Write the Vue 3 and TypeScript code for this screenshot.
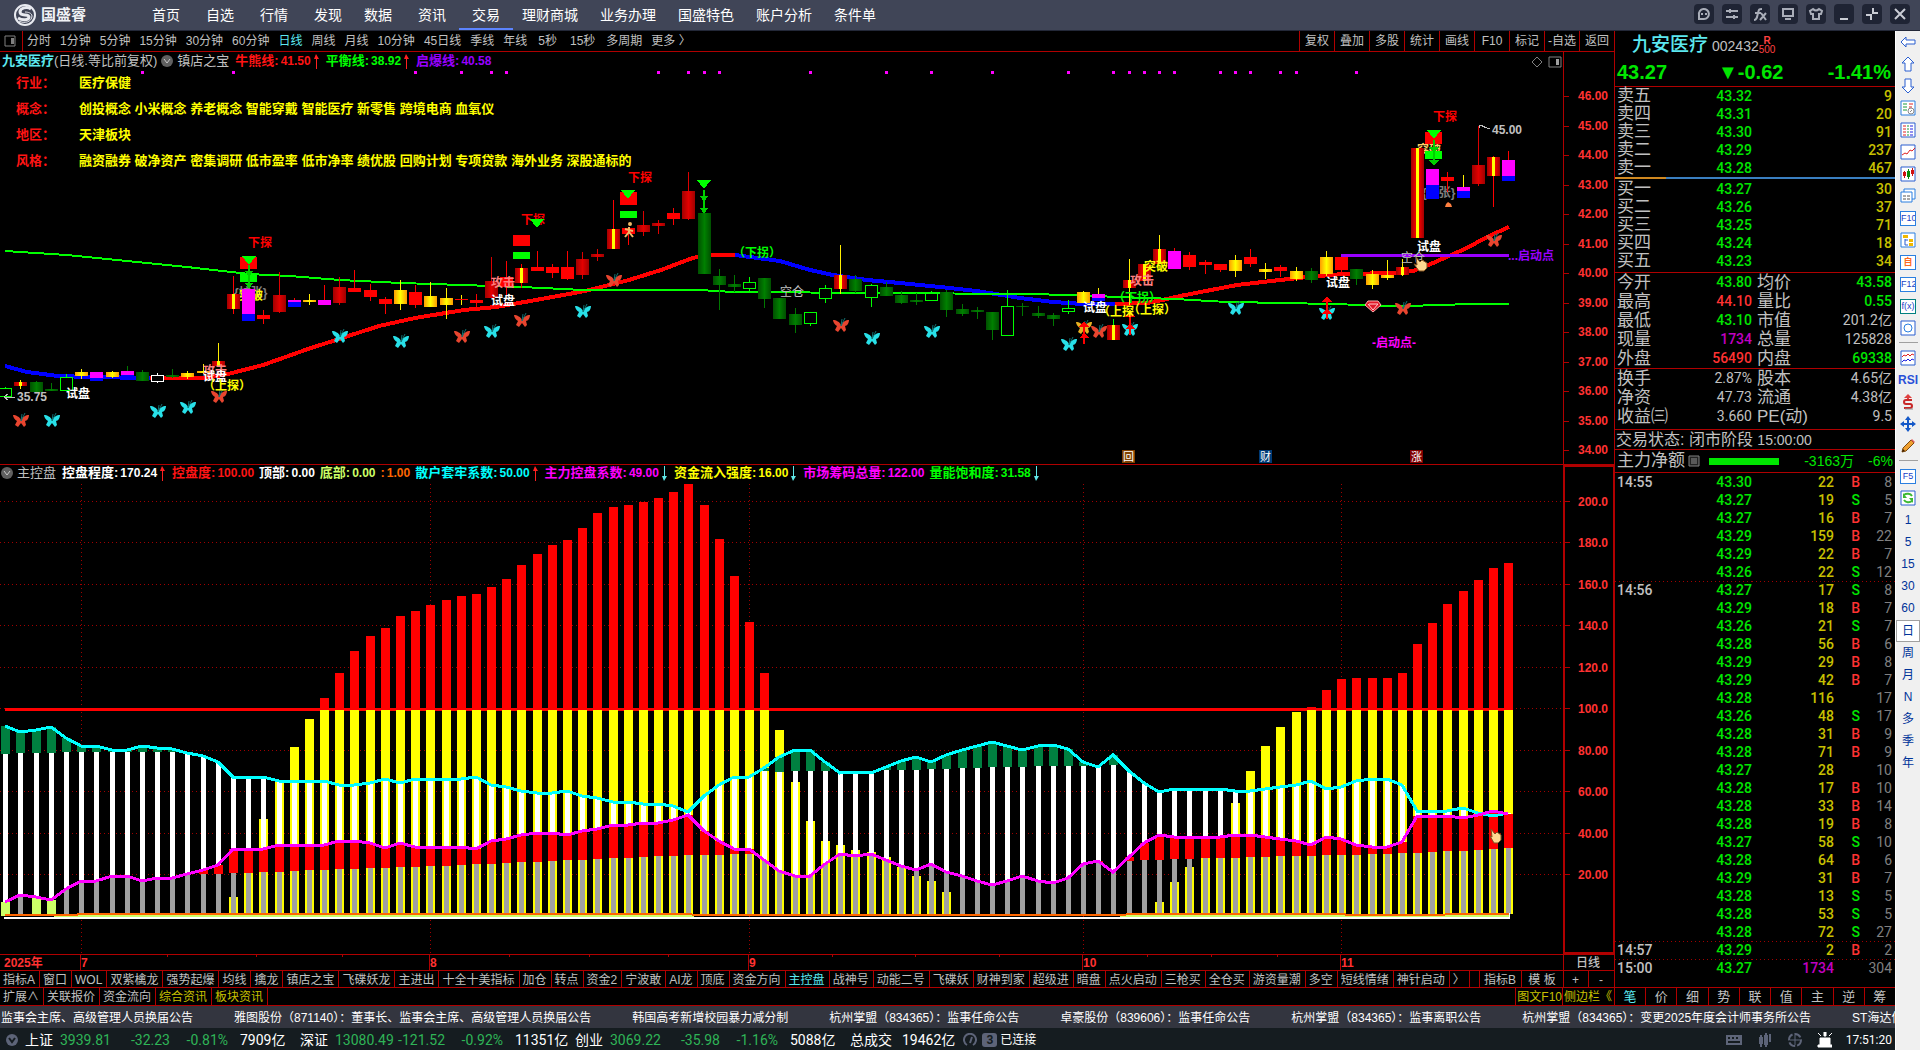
<script setup lang="ts">
type Shape = { d: string; f?: string; s?: string; w?: number }
type Tool = { label: string; text?: string; color?: string; box?: string; shapes?: Shape[]; on?: boolean; sep?: boolean; bold?: boolean }

const navGroups: string[][] = [
  ['首页', '自选', '行情', '发现'],
  ['数据', '资讯', '交易'],
  ['理财商城', '业务办理', '国盛特色', '账户分析', '条件单'],
]

const windowIcons: { label: string; shapes: Shape[] }[] = [
  { label: '消息', shapes: [{ d: 'M5 16v-5a5 5 0 1 1 5 4H5M8 9v2M12 9v2', s: '#a9adb8', w: 2 }] },
  { label: '设置', shapes: [{ d: 'M4 7h12M4 13h12M8 5v4M12 11v4', s: '#a9adb8', w: 2 }] },
  { label: '公式', shapes: [{ d: 'M4 16c3 0 3-3 4-7s1-4 4-4M5 9h6M11 9l5 7M16 9l-6 7', s: '#a9adb8', w: 2 }] },
  { label: '屏幕', shapes: [{ d: 'M5 5h10v7H5zM7 15h6', s: '#a9adb8', w: 2 }] },
  { label: '皮肤', shapes: [{ d: 'M7 5l-3 2 1 3h2v5h6v-5h2l1-3-3-2q-3 3-6 0z', s: '#a9adb8', w: 2 }] },
  { label: '最小化', shapes: [{ d: 'M6 15h8', s: '#c9ccd4', w: 2 }] },
  { label: '还原', shapes: [{ d: 'M11 4v5h5M9 16v-5H4', s: '#c9ccd4', w: 2 }] },
  { label: '关闭', shapes: [{ d: 'M5 5l10 10M15 5L5 15', s: '#c9ccd4', w: 2 }] },
]

const periods = ['分时', '1分钟', '5分钟', '15分钟', '30分钟', '60分钟', '日线', '周线', '月线', '10分钟', '45日线', '季线', '年线', '5秒', '15秒', '多周期', '更多 〉']
const chartActions = ['复权', '叠加', '多股', '统计', '画线', 'F10', '标记', '-自选', '返回']

const topics = [
  ['行业：', '医疗保健'],
  ['概念：', '创投概念 小米概念 养老概念 智能穿戴 智能医疗 新零售 跨境电商 血氧仪'],
  ['地区：', '天津板块'],
  ['风格：', '融资融券 破净资产 密集调研 低市盈率 低市净率 绩优股 回购计划 专项贷款 海外业务 深股通标的'],
]

type Reading = { n: string; v: string; c: string; a?: 'up' | 'down' }
const mainReadings: Reading[] = [
  { n: '牛熊线:', v: '41.50', c: '#ff1414', a: 'up' },
  { n: '平衡线:', v: '38.92', c: '#00ff00', a: 'up' },
  { n: '启爆线:', v: '40.58', c: '#9900ff' },
]
const subReadings: Reading[] = [
  { n: '控盘程度:', v: '170.24', c: '#ffffff', a: 'up' },
  { n: '控盘度:', v: '100.00', c: '#ff1414' },
  { n: '顶部:', v: '0.00', c: '#ffffff' },
  { n: '底部:', v: '0.00', c: '#ccff66' },
  { n: ':', v: '1.00', c: '#ff6600' },
  { n: '散户套牢系数:', v: '50.00', c: '#00ffff', a: 'up' },
  { n: '主力控盘系数:', v: '49.00', c: '#ff00ff', a: 'down' },
  { n: '资金流入强度:', v: '16.00', c: '#ffff00', a: 'down' },
  { n: '市场筹码总量:', v: '122.00', c: '#ff00ff' },
  { n: '量能饱和度:', v: '31.58', c: '#00ff00', a: 'down' },
]

/* Horizontal position of the n-th trading day. */
const dayX = (i: number): number => Math.round(5.3 + i * 15.18)

/* Candles: style, body top, body bottom, high, low, [split], [wick colour].
   Heights are thirds of a pixel below the base line of their run. */
type Row = [string, number, number, number, number, number?, string?]
type Candle = { x: number; k: string; top: number; bot: number; hi: number; lo: number; mid: number; wick: string }
const wickOf: Record<string, string> = { R: '#ff0000', D: '#dd0000', Y: '#ff0000', G: '#007800', H: '#00ff00', O: '#ffee00', M: '#ff0000', W: '#ffffff' }
function run(start: number, base: number, rows: Row[]): Candle[] {
  const y = (v: number) => Math.round(base + v / 3)
  return rows.map((r, n) => ({
    x: dayX(start + n), k: r[0], top: y(r[1]), bot: y(r[2]), hi: y(r[3]), lo: y(r[4]),
    mid: r[5] ? y(r[5]) : 0, wick: r[6] ?? wickOf[r[0]],
  }))
}
const candles: Candle[] = [
  ...run(0, 220, [
    ['H', 505, 527, 500, 527], ['Y', 487, 497, 480, 508, 0, '#ffee00'], ['G', 486, 515, 482, 518], ['G', 507, 513, 490, 513],
    ['H', 472, 509, 462, 509], ['O', 456, 467, 446, 478], ['M', 456, 483, 456, 483, 474], ['O', 456, 470, 453, 473],
    ['M', 453, 480, 438, 480, 465, '#007800'], ['G', 456, 483, 450, 483], ['W', 466, 482, 459, 488], ['G', 465, 470, 447, 473],
    ['O', 459, 471, 453, 476], ['O', 452, 458, 432, 462], ['Y', 422, 437, 369, 437, 0, '#ffee00'], ['Y', 222, 267, 168, 282],
    ['M', 208, 303, 208, 303, 282], ['R', 285, 297, 270, 311], ['D', 225, 275, 156, 279], ['M', 240, 261, 234, 261, 246],
    ['O', 240, 245, 222, 255], ['M', 240, 255, 195, 255], ['D', 201, 249, 171, 255], ['R', 204, 215, 150, 215],
    ['R', 210, 231, 192, 243], ['R', 237, 251, 231, 282], ['O', 210, 252, 180, 270], ['R', 216, 255, 195, 263],
    ['O', 228, 261, 186, 261], ['O', 234, 255, 204, 297], ['R', 238, 241, 225, 255, 0, '#ffee00'], ['R', 240, 249, 222, 261],
    ['D', 183, 234, 111, 234], ['R', 170, 200, 123, 230], ['Y', 144, 189, 132, 204], ['R', 141, 153, 93, 153],
    ['R', 141, 159, 132, 174], ['R', 141, 177, 93, 180], ['D', 117, 165, 96, 177], ['D', 102, 111, 87, 122],
    ['Y', 27, 87, -60, 87], ['R', 24, 42, 24, 75], ['D', 15, 36, -27, 48], ['D', 9, 18, 0, 42],
    ['R', -21, -3, -36, 15], ['D', -87, -3, -144, 0], ['G', -21, 162, -21, 162],
  ]),
  ...run(47, 160, [
    ['G', 348, 375, 327, 450], ['G', 372, 381, 345, 396], ['H', 366, 384, 351, 393], ['G', 354, 417, 354, 444],
    ['G', 414, 477, 414, 477], ['G', 462, 495, 444, 519], ['H', 456, 489, 456, 498], ['H', 384, 414, 375, 429],
    ['Y', 345, 387, 255, 402, 0, '#ffee00'], ['G', 357, 393, 345, 399], ['H', 376, 411, 372, 441], ['G', 381, 408, 366, 408],
    ['G', 405, 429, 393, 432], ['G', 420, 426, 399, 435], ['H', 399, 420, 393, 420], ['G', 396, 450, 390, 471],
    ['G', 447, 462, 432, 468], ['G', 450, 456, 441, 477], ['G', 456, 510, 456, 540], ['H', 438, 525, 390, 525],
    ['G', 438, 441, 429, 468], ['G', 459, 468, 438, 474], ['G', 465, 477, 459, 498], ['H', 444, 453, 420, 462],
    ['O', 396, 429, 393, 429], ['M', 402, 423, 384, 423, 413, '#ffee00'], ['Y', 495, 540, 477, 540, 0, '#00ff00'],
    ['Y', 360, 384, 297, 435, 0, '#ffee00'], ['Y', 312, 363, 312, 363], ['Y', 267, 312, 225, 312, 0, '#ffee00'],
  ]),
  ...run(77, 100, [
    ['M', 453, 507, 444, 507], ['R', 465, 501, 456, 510], ['R', 486, 495, 480, 522], ['R', 492, 510, 492, 516],
    ['O', 480, 513, 465, 531], ['R', 471, 492, 447, 501], ['O', 507, 516, 489, 537], ['R', 501, 513, 495, 531],
    ['O', 513, 537, 501, 543], ['G', 513, 540, 504, 549], ['O', 471, 522, 453, 528], ['R', 471, 510, 471, 516],
    ['G', 507, 537, 507, 555], ['O', 522, 555, 510, 567], ['O', 525, 534, 480, 540], ['Y', 501, 525, 477, 528, 0, '#ffee00'],
    ['Y', 144, 414, 144, 414], ['M', 207, 297, 207, 297, 255], ['R', 231, 243, 216, 276], ['M', 261, 293, 225, 293, 273, '#ffee00'],
    ['D', 195, 252, 78, 258], ['Y', 171, 228, 168, 321], ['M', 180, 243, 153, 243, 228],
  ]),
]

const signalDots = [9, 15, 27, 30, 32, 33, 43, 45, 46, 47, 53, 58, 61, 65, 70, 73, 74, 75, 76, 77, 80, 81, 82, 84, 85, 89]
const butterflies: [number, number, string][] = [
  [21, 420, 'r'], [52, 420, 'c'], [158, 411, 'c'], [188, 407, 'c'], [219, 396, 'r'], [340, 336, 'c'], [401, 341, 'c'],
  [462, 336, 'r'], [492, 331, 'c'], [522, 320, 'r'], [583, 311, 'c'], [614, 280, 'r'], [841, 325, 'r'], [872, 338, 'c'],
  [932, 331, 'c'], [1069, 344, 'c'], [1084, 327, 'g'], [1099, 331, 'r'], [1130, 329, 'c'], [1236, 308, 'c'],
  [1327, 313, 'c'], [1403, 308, 'r'], [1494, 240, 'r'],
]
const wingColor: Record<string, string> = { r: '#e8452f', c: '#28e0e8', g: '#e8b020' }
const marks: [number, number, string, string][] = [
  [248, 247, '下探', '#ff0000'], [521, 224, '下探', '#ff0000'], [628, 182, '下探', '#ff0000'], [1433, 121, '下探', '#ff0000'],
  [203, 375, '攻击', '#ff8080'], [203, 381, '试盘', '#ffffff'], [203, 390, '（上探）', '#ffff00'], [66, 398, '试盘', '#ffffff'],
  [491, 287, '攻击', '#ff8080'], [491, 305, '试盘', '#ffffff'],
  [733, 257, '（下拐）', '#00ff00'], [1130, 285, '攻击', '#ff8080'], [1144, 271, '突破', '#ffff00'],
  [1113, 302, '（下拐）', '#00ff00'], [1083, 312, '试盘', '#ffffff'], [1098, 316, '（上探', '#ffff00'], [1128, 314, '（上探）', '#ffff00'],
  [1326, 287, '试盘', '#ffffff'], [1372, 347, '-启动点-', '#ff00ff'],
  [1417, 251, '试盘', '#ffffff'], [1508, 260, '...启动点', '#9900ff'],
  [1492, 134, '45.00', '#c0c0c0'], [17, 401, '35.75', '#c0c0c0'],
]
const underMarks: [number, number, string, string][] = [
  [234, 297, '{扩张}', '#808080'], [239, 300, '突破', '#ffff00'], [1422, 197, '{扩张}', '#808080'], [1417, 154, '突破', '#ffcc66'],
]
const emptyMarks: [number, number][] = [[780, 296], [1401, 262]]
const flags: [number, string, string][] = [[1122, '回', '#804000'], [1259, '财', '#003a75'], [1410, '涨', '#800000']]

const priceTicks = Array.from({ length: 13 }, (_, i) => ({ label: (46 - i) + '.00', y: Math.round(96 + i * 29.5) }))

/* Lower pane series, in thirds of a pixel below y = 460. */
const subY = (v: number): number => Math.round(460 + v / 3)
const FLOOR = 1362
const control = [
  ...Array(15).fill(FLOOR), 1310, 1195, 1077, 965, 861, 777, 714, 639, 573, 528, 504, 468, 453, 435, 420, 408, 402, 381, 357, 315,
  282, 255, 240, 204, 159, 141, 135, 126, 114, 96, 72, 135, 237, 348, 486, 640, 810, 966, 1083, 1143, 1155, 1170, 1176, 1192, 1220,
  1248, 1263, 1296, ...Array(13).fill(FLOOR), 1326, 1266, 1221, 1160, 1130, 1030, 933, 858, 801, 756, 741, 690, 657, 654, 654, 654,
  639, 552, 490, 431, 394, 361, 324, 310,
] as number[]
const retail = [
  797, 815, 809, 802, 835, 859, 859, 870, 870, 859, 865, 866, 878, 889, 905, 952, 952, 952, 964, 964, 964, 964, 976, 976, 970, 958,
  970, 958, 958, 958, 958, 952, 976, 982, 994, 1000, 1000, 994, 1009, 1015, 1027, 1027, 1033, 1033, 1039, 1056, 1009, 976, 952, 952,
  925, 890, 871, 871, 905, 940, 935, 940, 922, 902, 890, 906, 884, 871, 859, 847, 859, 871, 859, 854, 866, 905, 922, 885, 932, 970,
  995, 988, 988, 988, 988, 994, 994, 988, 982, 976, 964, 988, 982, 964, 958, 958, 975, 1052, 1052, 1052, 1044, 1058, 1068, 1058,
]
const major = [
  1325, 1306, 1311, 1319, 1286, 1264, 1264, 1249, 1249, 1264, 1255, 1255, 1242, 1231, 1214, 1168, 1168, 1168, 1156, 1156, 1156, 1156,
  1144, 1144, 1150, 1163, 1150, 1162, 1162, 1162, 1162, 1168, 1144, 1138, 1126, 1120, 1120, 1126, 1114, 1108, 1096, 1096, 1090, 1090,
  1080, 1065, 1114, 1144, 1168, 1168, 1200, 1232, 1249, 1249, 1212, 1183, 1189, 1183, 1200, 1218, 1230, 1213, 1235, 1248, 1264, 1276,
  1264, 1249, 1264, 1270, 1255, 1212, 1202, 1236, 1192, 1150, 1126, 1132, 1132, 1132, 1132, 1126, 1126, 1132, 1138, 1144, 1156, 1132,
  1138, 1156, 1162, 1162, 1145, 1069, 1069, 1069, 1075, 1064, 1052, 1062,
]
function blend(points: [number, number][], i: number): number {
  for (let n = 1; n < points.length; n++) {
    const [x0, y0] = points[n - 1]
    const [x1, y1] = points[n]
    if (i <= x1) return y0 + ((y1 - y0) * (i - x0)) / (x1 - x0)
  }
  return points[points.length - 1][1]
}
const bars = control.map((c, i) => {
  const high = blend([[0, 881], [5, 876], [14, 875], [51, 935], [60, 929], [64, 923], [73, 915], [99, 905]], i)
  const low = blend([[0, 1250], [14, 1241], [30, 1215], [45, 1185], [49, 1182], [55, 1181], [70, 1208], [76, 1199], [86, 1187], [93, 1179], [99, 1164]], i)
  return {
    i, x: dayX(i), c: subY(c), hasC: c < FLOOR, line: 710,
    green: retail[i] < high, r: subY(retail[i]), hi: subY(Math.max(high, retail[i])),
    red: major[i] < low, m: subY(major[i]), lo: subY(Math.max(low, major[i])),
    lime: i === 0 || i === 2 || i === 3,
  }
})
const trace = (s: number[]): string => s.map((v, i) => dayX(i) + ',' + subY(v)).join(' ')
const subTicks = ['200.0', '180.0', '160.0', '140.0', '120.0', '100.0', '80.00', '60.00', '40.00', '20.00']
  .map((label, i) => ({ label, y: Math.round(501 + i * 41.44) }))
const months: [number, string][] = [[81, '7'], [430, '8'], [749, '9'], [1083, '10'], [1341, '11']]
const weekTicks = [167, 256, 342, 509, 589, 668, 832, 915, 999, 1147, 1211, 1277]

const templates = ['指标A', '窗口', 'WOL', '双紫檎龙', '强势起爆', '均线', '擒龙', '镇店之宝', '飞碟妖龙', '主进出', '十全十美指标', '加仓', '转点', '资金2', '宁波敢', 'AI龙', '顶底', '资金方向', '主控盘', '战神号', '动能二号', '飞碟妖', '财神到家', '超级进', '暗盘', '点火启动', '三枪买', '全仓买', '游资量潮', '多空', '短线情绪', '神针启动', '〉']
const extras = ['扩展∧', '关联报价', '资金流向', '综合资讯', '板块资讯']

const sells = [['卖五', '43.32', '9'], ['卖四', '43.31', '20'], ['卖三', '43.30', '91'], ['卖二', '43.29', '237'], ['卖一', '43.28', '467']]
const buys = [['买一', '43.27', '30'], ['买二', '43.26', '37'], ['买三', '43.25', '71'], ['买四', '43.24', '18'], ['买五', '43.23', '34']]
const statsA = [
  ['今开', '43.80', 'g', '均价', '43.58', 'g'], ['最高', '44.10', 'r', '量比', '0.55', 'g'], ['最低', '43.10', 'g', '市值', '201.2亿', 'w'],
  ['现量', '1734', 'm', '总量', '125828', 'w'], ['外盘', '56490', 'r', '内盘', '69338', 'g'],
]
const statsB = [
  ['换手', '2.87%', 'w', '股本', '4.65亿', 'w'], ['净资', '47.73', 'w', '流通', '4.38亿', 'w'], ['收益㈢', '3.660', 'w', 'PE(动)', '9.5', 'w'],
]
const deals: string[][] = [
  ['14:55', '43.30', '22', 'B', '8'], ['', '43.27', '19', 'S', '5'], ['', '43.27', '16', 'B', '7'], ['', '43.29', '159', 'B', '22'],
  ['', '43.29', '22', 'B', '7'], ['', '43.26', '22', 'S', '12'], ['14:56', '43.27', '17', 'S', '8'], ['', '43.29', '18', 'B', '7'],
  ['', '43.26', '21', 'S', '7'], ['', '43.28', '56', 'B', '6'], ['', '43.29', '29', 'B', '8'], ['', '43.29', '42', 'B', '7'],
  ['', '43.28', '116', '', '17'], ['', '43.26', '48', 'S', '17'], ['', '43.28', '31', 'B', '9'], ['', '43.28', '71', 'B', '9'],
  ['', '43.27', '28', '', '10'], ['', '43.28', '17', 'B', '10'], ['', '43.28', '33', 'B', '14'], ['', '43.28', '19', 'B', '8'],
  ['', '43.27', '58', 'S', '10'], ['', '43.28', '64', 'B', '6'], ['', '43.29', '31', 'B', '7'], ['', '43.28', '13', 'S', '5'],
  ['', '43.28', '53', 'S', '5'], ['', '43.28', '72', 'S', '27'], ['14:57', '43.29', '2', 'B', '2'], ['15:00', '43.27', '1734', '', '304'],
]
const panelTabs = ['笔', '价', '细', '势', '联', '值', '主', '逆', '筹']

const news = [
  '监事会主席、高级管理人员换届公告', '雅图股份（871140）：董事长、监事会主席、高级管理人员换届公告', '韩国高考新增校园暴力减分制',
  '杭州掌盟（834365）：监事任命公告', '卓豪股份（839606）：监事任命公告', '杭州掌盟（834365）：监事离职公告',
  '杭州掌盟（834365）：变更2025年度会计师事务所公告', 'ST海达信',
]
const indices = [
  ['上证', '3939.81', '-32.23', '-0.81%', '7909亿'], ['深证', '13080.49', '-121.52', '-0.92%', '11351亿'], ['创业', '3069.22', '-35.98', '-1.16%', '5088亿'],
]

const frame = 'M1 1h14v14H1z'
const tools: Tool[] = [
  { label: '后退', shapes: [{ d: 'M1 8l5-5v3h9v4H6v3z', s: '#2a5fd0', f: '#fff' }] },
  { label: '上移', shapes: [{ d: 'M8 1l6 6h-3v8H5V7H2z', s: '#2a5fd0', f: '#fff' }] },
  { label: '下移', shapes: [{ d: 'M8 15l6-6h-3V1H5v8H2z', s: '#2a5fd0', f: '#fff' }] },
  { label: '报价', shapes: [{ d: frame, s: '#2a7fe0', f: '#fff' }, { d: 'M3 4h4M3 7h4M3 10h4', s: '#1a9a3a' }, { d: 'M9 4h4M9 7h3', s: '#e02020' }, { d: 'M8 11a3 3 0 1 0 6 0a3 3 0 1 0-6 0M10 12l2-2', s: '#888' }] },
  { label: '列表', shapes: [{ d: frame, s: '#2a5fd0', f: '#fff' }, { d: 'M3 4h3M3 7h3M3 10h3M3 13h3', s: '#e02020' }, { d: 'M7 4h2M7 7h2M7 10h2M7 13h2', s: '#1a9a3a' }, { d: 'M10 4h3M10 7h3M10 10h3M10 13h3', s: '#2020e0' }] },
  { label: '走势', shapes: [{ d: frame, s: '#2a5fd0', f: '#fff' }, { d: 'M2 11l3-2 2 1 3-4 2 1 3-3', s: '#e02020' }] },
  { label: '阳线', shapes: [{ d: frame, s: '#2a5fd0', f: '#fff' }, { d: 'M3 6h3v4H3zM11 4h3v4h-3zM4 5h1v7H4zM12 2h1v8h-1z', f: '#d01010' }, { d: 'M7 5h3v6H7zM8 3h1v10H8z', f: '#0a8a0a' }] },
  { label: '资料', shapes: [{ d: 'M4 1h11v10H4z', s: '#2a7fe0', f: '#fff' }, { d: 'M1 4h11v10H1z', s: '#2a7fe0', f: '#fff' }, { d: 'M3 8h3M7 8h3M3 11h3M7 11h3', s: '#555' }] },
  { label: '基本资料', text: 'F10', box: '#2a7fe0' },
  { label: '结构', shapes: [{ d: frame, s: '#2a7fe0', f: '#fff' }, { d: 'M5 7v6h3M5 8h3', s: '#2a5fd0' }, { d: 'M3 3h5v3H3zM9 7h4v3H9zM9 11h4v3H9z', f: '#f0b800' }] },
  { label: '自选', text: '自', box: '#2a7fe0', color: '#ff6a20', bold: true },
  { label: '功能十二', text: 'F12', box: '#2a7fe0' },
  { label: '公式', text: 'f(x)', box: '#008080' },
  { label: '圆', shapes: [{ d: frame, s: '#2a5fd0', f: '#fff' }, { d: 'M4 8a4 4 0 1 0 8 0a4 4 0 1 0-8 0', s: '#2a7fe0' }] },
  { label: '波动', sep: true, shapes: [{ d: frame, s: '#2a5fd0', f: '#fff' }, { d: 'M2 7l2-2 2 1 2-2 2 2 2-2 2 1', s: '#e02020' }, { d: 'M2 12l2-2 2 1 2-2 2 2 2-2 2 1', s: '#2020e0' }] },
  { label: '强弱', text: 'RSI', color: '#2a4fd8', bold: true },
  { label: '资金', shapes: [{ d: 'M8 0l4 4h-3v1H7V4H4z', f: '#e04040' }, { d: 'M12 6H6a2 2 0 0 0 0 4h4a2 2 0 0 1 0 4H4', s: '#c82828', w: 2 }, { d: 'M5 15h8', s: '#909090' }] },
  { label: '移动', shapes: [{ d: 'M8 0l3 4H9v3h3V5l4 3-4 3V9H9v3h2l-3 4-3-4h2V9H4v2L0 8l4-3v2h3V4H5z', f: '#1458c8' }] },
  { label: '画笔', shapes: [{ d: 'M2 14l1-4 8-8 3 3-8 8z', f: '#f0a030', s: '#7a4a10' }, { d: 'M11 2l3 3 1-1-3-3z', f: '#e06060' }, { d: 'M2 14l1-3 2 2z', f: '#402000' }] },
  { label: '功能五', sep: true, text: 'F5', box: '#2a7fe0' },
  { label: '刷新', shapes: [{ d: frame, s: '#2a5fd0', f: '#fff' }, { d: 'M12 6a5 4 0 0 0-8-1M4 10a5 4 0 0 0 8 1', s: '#3cb832', w: 2 }, { d: 'M3 3v5h4zM13 13V8H9z', f: '#3cb832' }] },
  ...['1', '5', '15', '30', '60', '日', '周', '月', 'N', '多', '季', '年'].map((t) => ({ label: t, text: t, color: '#003399', on: t === '日' })),
]
</script>

<template>
  <div class="app">
    <header class="top">
      <div class="brand">
        <svg width="24" height="24" viewBox="0 0 24 24" aria-hidden="true">
          <circle cx="12" cy="12" r="10" fill="none" stroke="#e8eaf0" stroke-width="2" />
          <path d="M18 6c-4-3-11-1-11 3 0 5 9 1 9 5 0 3-6 4-11 1" fill="none" stroke="#e8eaf0" stroke-width="3" />
          <path d="M6 18c5 3 13 1 13-5 0-3-4-4-7-4" fill="none" stroke="#e8eaf0" stroke-width="1" />
        </svg>
        <b>国盛睿</b>
      </div>
      <nav class="nav">
        <div v-for="(g, n) in navGroups" :key="n" class="nav-group" :class="{ wide: n === 2 }">
          <a v-for="t in g" :key="t" href="#" :class="{ on: t === '交易' }">{{ t }}</a>
        </div>
      </nav>
      <div class="win">
        <button v-for="b in windowIcons" :key="b.label" type="button" :aria-label="b.label">
          <svg width="20" height="20" viewBox="0 0 20 20">
            <path v-for="(p, i) in b.shapes" :key="i" :d="p.d" fill="none" :stroke="p.s" :stroke-width="p.w" />
          </svg>
        </button>
      </div>
    </header>

    <div class="body">
      <div class="left">
        <div class="work">
          <main class="charts">
            <div class="periods">
              <button type="button" class="pane-toggle" aria-label="侧栏">
                <svg width="12" height="12" viewBox="0 0 12 12"><path d="M1 1h10v10H1z" fill="none" stroke="#808080" /><path d="M7 3h3v6H7z" fill="#808080" /></svg>
              </button>
              <div class="period-list">
                <button v-for="p in periods" :key="p" type="button" :class="{ on: p === '日线', spaced: p === '5秒' || p === '15秒' }">{{ p }}</button>
              </div>
              <div class="actions">
                <button v-for="a in chartActions" :key="a" type="button">{{ a }}</button>
              </div>
            </div>

            <section class="pane">
              <svg class="plot" viewBox="0 52 1615 412" shape-rendering="crispEdges">
                <defs>
                  <linearGradient id="gd"><stop offset="0" stop-color="#a00000" /><stop offset=".5" stop-color="#e40000" /><stop offset="1" stop-color="#a00000" /></linearGradient>
                  <linearGradient id="gg"><stop offset="0" stop-color="#005000" /><stop offset=".5" stop-color="#008000" /><stop offset="1" stop-color="#005000" /></linearGradient>
                  <linearGradient id="go"><stop offset="0" stop-color="#ff9c00" /><stop offset=".5" stop-color="#ffff00" /><stop offset="1" stop-color="#ff9c00" /></linearGradient>
                  <linearGradient id="gy">
                    <stop offset="0" stop-color="#a00000" /><stop offset=".37" stop-color="#f00000" /><stop offset=".38" stop-color="#ffff00" />
                    <stop offset=".62" stop-color="#ffff00" /><stop offset=".63" stop-color="#f00000" /><stop offset="1" stop-color="#a00000" />
                  </linearGradient>
                </defs>
                <rect v-for="i in signalDots" :key="'s' + i" :x="dayX(i) - 1" y="71" width="3" height="3" fill="#ff00ff" />
                <text v-for="(m, i) in underMarks" :key="'u' + i" :x="m[0]" :y="m[1]" :fill="m[3]" class="mark">{{ m[2] }}</text>
                <polyline points="5,366 27,372 58,376 89,377 150,378" class="thick blue" />
                <polyline points="150,378 205,378 228,374 263,365 308,349 339,339 379,326 415,318 464,310 496,307 536,300 585,291 629,280 661,270 690,259 700,256 711,255 735,255" class="thick red" />
                <polyline points="735,255 750,257 780,261 810,270 833,275 867,280 900,283 940,287 977,291 1020,298 1053,302 1083,304 1115,304" class="thick blue" />
                <polyline points="1115,304 1147,303 1167,299 1180,296 1237,285 1280,280 1307,277 1343,274 1397,273 1413,271 1433,263 1467,248 1487,237 1509,227" class="thick red" />
                <polyline points="5,251 20,252 67,255 127,261 187,267 249,274 290,276 340,280 401,283 462,285 522,287 583,290 700,290 733,292 887,293 1020,294 1077,295 1117,297 1175,299 1227,302 1287,303 1367,305 1390,306 1413,306 1433,305 1478,304 1509,304" fill="none" stroke="#00ff00" stroke-width="2" />
                <g v-for="(c, i) in candles" :key="'c' + i">
                  <rect :x="c.x" :y="c.hi" width="1" :height="Math.max(0, c.top - c.hi)" :fill="c.wick" />
                  <rect :x="c.x" :y="c.bot" width="1" :height="Math.max(0, c.lo - c.bot)" :fill="c.wick" />
                  <rect v-if="c.k === 'H' || c.k === 'W'" :x="c.x - 6" :y="c.top" width="12" :height="c.bot - c.top" fill="#000" :stroke="c.wick" />
                  <rect v-else :x="c.x - 6" :y="c.top" width="13" :height="Math.max(1, c.bot - c.top)" :class="'k' + c.k" />
                  <rect v-if="c.mid" :x="c.x - 6" :y="c.mid" width="13" :height="c.bot - c.mid" fill="#0000ff" />
                </g>
                <rect x="1341" y="254" width="168" height="3" fill="#9900ff" />

                <g fill="#ff0000">
                  <rect x="240" y="257" width="17" height="12" /><rect x="513" y="235" width="17" height="11" />
                  <rect x="620" y="192" width="17" height="13" /><rect x="1425" y="132" width="17" height="12" />
                </g>
                <g fill="#00ff00">
                  <rect x="240" y="274" width="17" height="8" /><rect x="513" y="252" width="17" height="7" />
                  <rect x="620" y="211" width="17" height="7" /><rect x="1425" y="151" width="17" height="8" />
                </g>
                <g fill="#00d000">
                  <path d="M245 271h8l-4 6zM245 283h8l-4 6zM248 265h2v20h-2z" />
                  <path d="M700 196h8l-4 6zM700 208h8l-4 6zM703 190h2v20h-2z" />
                  <path d="M1429 147h10l-5 6zM1429 160h10l-5 6zM1433 140h2v22h-2z" />
                </g>
                <g shape-rendering="auto">
                  <g v-for="(b, i) in butterflies" :key="'b' + i" :transform="'translate(' + b[0] + ' ' + b[1] + ')'" :fill="wingColor[b[2]]">
                    <path d="M-8-5C-5-5-1-3 0 0C1-3 5-5 8-5C8-2 6 1 4 1L5 5L3 7L0 3L-3 7L-6 5L-4 1C-6 0-8-3-8-5Z" />
                    <path d="M0 1L1-6M0 1L4-7" stroke="#107070" fill="none" />
                  </g>
                  <path d="M1373 312l-8-7 3-4h10l3 4z" fill="#e01828" stroke="#ffb0b0" />
                  <path d="M1368 304l5 6 5-6M1369 304h9" fill="none" stroke="#ffd0d0" />
                  <path d="M1445 207h7l-1-3-3-2-2 2z" fill="#ff8040" />
                  <g id="runner" fill="none" stroke="#f0b868" stroke-width="2">
                    <path d="M629 227v5l-4 5M629 232l4 5M625 229l8 2" /><circle cx="630" cy="224" r="1" />
                  </g>
                </g>
                <g fill="#ff0000">
                  <path d="M1079 327l5-6 5 6zM1080 338l4-6 5 6zM1083 325h2v19h-2z" />
                  <path d="M1125 317l5-6 5 6zM1126 329l4-6 5 6zM1129 315h2v20h-2z" />
                  <path d="M1322 302l5-6 5 6zM1322 314l5-6 5 6zM1326 300h2v19h-2z" />
                </g>
                <text v-for="m in emptyMarks" :key="'e' + m[0]" :x="m[0]" :y="m[1]" class="empty">空仓</text>
                <text v-for="(m, i) in marks" :key="'m' + i" :x="m[0]" :y="m[1]" :fill="m[3]" class="mark">{{ m[2] }}</text>
                <path fill="#00ff00" d="M242 256h14l-7 9zM530 219h14l-7 9zM621 190h14l-7 9zM697 180h14l-7 9zM1427 130h14l-7 9z" />
                <path id="hand" shape-rendering="auto" d="M1416 257l4 5 2-2 5 3v5l-3 3h-5l-5-7 3 1z" fill="#ffd890" stroke="#805020" />
                <path d="M4 397h11M4 397l4-3M4 397l4 3M1479 125l11 4M1479 125h4M1479 125v3" fill="none" stroke="#c0c0c0" />
                <g v-for="f in flags" :key="f[1]">
                  <path :d="'M' + f[0] + ' 450h12l1 1v12h-13z'" :fill="f[2]" />
                  <text :x="f[0] + 1" y="461" class="flag">{{ f[1] }}</text>
                </g>
                <path d="M1563.5 52v412M1614.5 52v412" stroke="#b00000" />
                <g v-for="t in priceTicks" :key="t.label">
                  <rect x="1564" :y="t.y" width="5" height="1" fill="#b00000" />
                  <text x="1578" :y="t.y + 4" class="axis">{{ t.label }}</text>
                </g>
              </svg>
              <div class="legend">
                <b class="stock">九安医疗</b><span>(日线.等比前复权)</span>
                <button type="button" class="drop" aria-label="展开指标"><svg width="12" height="12" viewBox="0 0 12 12"><path d="M3 4l3 4 3-4" fill="none" stroke="#c8c8c8" /></svg></button>
                <span class="ind">镇店之宝</span>
                <span v-for="r in mainReadings" :key="r.n" class="reading" :style="{ color: r.c }">
                  {{ r.n }}<b>{{ r.v }}</b>
                  <svg v-if="r.a" width="7" height="15" viewBox="0 0 7 15"><path :d="r.a === 'up' ? 'M3 0l3 5H4v10H3V5H1z' : 'M3 15l3-5H4V0H3v10H1z'" :fill="r.a === 'up' ? '#ff2020' : '#60e8e8'" /></svg>
                </span>
              </div>
              <div class="legend-tools">
                <svg width="32" height="14" viewBox="0 0 32 14"><path d="M7 2l5 5-5 5-5-5zM19 2h12v10H19z" fill="none" stroke="#808080" /><path d="M26 4h3v6h-3z" fill="#a0a0a0" /></svg>
              </div>
              <dl class="topics">
                <div v-for="t in topics" :key="t[0]"><dt>{{ t[0] }}</dt><dd>{{ t[1] }}</dd></div>
              </dl>
            </section>

            <section class="pane sub">
              <svg class="plot" viewBox="0 465 1615 489" shape-rendering="crispEdges">
                <g stroke="#a00000" stroke-dasharray="1 3">
                  <path v-for="t in subTicks" :key="t.label" :d="'M0 ' + (t.y + 0.5) + 'H1563'" />
                  <path v-for="m in months" :key="m[1]" :d="'M' + (m[0] + 0.5) + ' 484V954'" />
                </g>
                <rect x="5" y="708" width="1504" height="3" fill="#ff0000" />
                <g v-for="b in bars" :key="b.i">
                  <rect v-if="b.hasC && b.c < b.line" :x="b.x - 4" :y="b.c" width="9" :height="b.line - b.c" fill="#ff0000" />
                  <rect v-if="b.hasC" :x="b.x - 4" :y="Math.max(b.c, b.line)" width="9" :height="914 - Math.max(b.c, b.line)" fill="#ffff00" />
                  <rect v-if="b.green" :x="b.x - 4" :y="b.r" width="9" :height="b.hi - b.r" fill="#008040" />
                  <rect :x="b.x - 2" :y="b.hi" width="5" :height="Math.max(0, b.m - b.hi)" fill="#ffffff" />
                  <rect :x="b.x - 2" :y="b.lo" width="5" :height="914 - b.lo" fill="#a0a0a0" />
                  <rect v-if="b.red" :x="b.x - 4" :y="b.m" width="9" :height="b.lo - b.m" fill="#ff0000" />
                  <rect v-if="b.lime" :x="b.x - 4" :y="b.m" width="9" :height="916 - b.m" fill="#ccff66" />
                </g>
                <path d="M4 917.5H1509V913" fill="none" stroke="#ffffff" stroke-width="2" />
                <rect x="54" y="915" width="640" height="2" fill="#ccff66" /><rect x="1120" y="915" width="389" height="2" fill="#ccff66" />
                <polyline points="5,915 73,915 82,914 688,914 696,915 1122,915 1130,914 1341,914 1350,915 1440,915 1450,914 1509,914" fill="none" stroke="#ff6600" stroke-width="2" />
                <polyline :points="trace(retail)" fill="none" stroke="#00ffff" stroke-width="3" />
                <polyline :points="trace(major)" fill="none" stroke="#ff00ff" stroke-width="3" />
                <path shape-rendering="auto" d="M1491 829l4 5 2-2 4 3v5l-3 3h-4l-4-7 2 1z" fill="#ffd890" stroke="#805020" />
                <path d="M1564 465v489M1614 465v489M1563 466h52M1563 953h52" stroke="#b00000" stroke-width="2" />
                <g v-for="t in subTicks" :key="t.label">
                  <rect x="1565" :y="t.y" width="5" height="1" fill="#b00000" />
                  <text x="1578" :y="t.y + 5" class="axis">{{ t.label }}</text>
                </g>
              </svg>
              <div class="legend">
                <button type="button" class="drop" aria-label="展开指标"><svg width="12" height="12" viewBox="0 0 12 12"><path d="M3 4l3 4 3-4" fill="none" stroke="#c8c8c8" /></svg></button>
                <span class="ind">主控盘</span>
                <span v-for="r in subReadings" :key="r.n" class="reading" :style="{ color: r.c }">
                  {{ r.n }}<b>{{ r.v }}</b>
                  <svg v-if="r.a" width="7" height="15" viewBox="0 0 7 15"><path :d="r.a === 'up' ? 'M3 0l3 5H4v10H3V5H1z' : 'M3 15l3-5H4V0H3v10H1z'" :fill="r.a === 'up' ? '#ff2020' : '#60e8e8'" /></svg>
                </span>
              </div>
            </section>

            <svg class="plot" viewBox="0 954 1615 16" shape-rendering="crispEdges">
              <path d="M0 954.5H1615M1563.5 954v16M1614.5 954v16" stroke="#b00000" />
              <text x="4" y="967" class="axis">2025年</text>
              <g v-for="m in months" :key="m[1]"><rect :x="m[0] - 1" y="954" width="1" height="16" fill="#b00000" /><text :x="m[0]" y="967" class="axis">{{ m[1] }}</text></g>
              <rect v-for="w in weekTicks" :key="w" :x="w" y="954" width="1" height="3" fill="#b00000" />
              <text x="1576" y="967" class="day">日线</text>
            </svg>

            <div class="tabs">
              <button v-for="t in templates" :key="t" type="button" :class="{ on: t === '主控盘' }">{{ t }}</button>
              <span class="push"></span>
              <button type="button" class="w42">指标B</button><button type="button" class="w42">模 板</button>
              <button type="button" class="w25">+</button><button type="button" class="w25">-</button>
            </div>
            <div class="tabs second">
              <button v-for="(t, i) in extras" :key="t" type="button" :class="{ gold: i > 2 }">{{ t }}</button>
              <span class="push"></span>
              <button type="button" class="gold tight">图文F10</button><button type="button" class="gold tight w51">侧边栏《</button>
            </div>
          </main>

          <aside class="panel">
            <div class="title"><b>九安医疗</b><span class="code">002432</span><span class="tag"><b>R</b><i>500</i></span></div>
            <div class="quote"><b>43.27</b><b class="chg">▼-0.62</b><b class="pct">-1.41%</b></div>
            <table class="book">
              <tbody><tr v-for="r in sells" :key="r[0]"><th scope="row">{{ r[0] }}</th><td class="g">{{ r[1] }}</td><td class="y">{{ r[2] }}</td></tr></tbody>
            </table>
            <div class="balance"><i></i></div>
            <table class="book">
              <tbody><tr v-for="r in buys" :key="r[0]"><th scope="row">{{ r[0] }}</th><td class="g">{{ r[1] }}</td><td class="y">{{ r[2] }}</td></tr></tbody>
            </table>
            <table class="stats s1">
              <tbody><tr v-for="r in statsA" :key="r[0]"><th scope="row">{{ r[0] }}</th><td :class="r[2]">{{ r[1] }}</td><th scope="row">{{ r[3] }}</th><td :class="r[5]">{{ r[4] }}</td></tr></tbody>
            </table>
            <table class="stats s2">
              <tbody><tr v-for="r in statsB" :key="r[0]"><th scope="row">{{ r[0] }}</th><td :class="r[2]">{{ r[1] }}</td><th scope="row">{{ r[3] }}</th><td :class="r[5]">{{ r[4] }}</td></tr></tbody>
            </table>
            <div class="state">交易状态: 闭市阶段 <span>15:00:00</span></div>
            <div class="flow">
              <span class="flow-name">主力净额</span>
              <svg width="12" height="12" viewBox="0 0 12 12"><path d="M1 1h10v10H1z" fill="#222" stroke="#808080" /><path d="M3 4h6M3 6h6M3 8h6" stroke="#909090" /></svg>
              <i></i><span class="amount">-3163万</span><span class="share">-6%</span>
            </div>
            <table class="deals">
              <colgroup><col class="c1" /><col class="c2" /><col class="c3" /><col class="c4" /><col /></colgroup>
              <tbody>
                <tr v-for="(d, i) in deals" :key="i" :class="{ mark: i > 0 && d[0] }">
                  <td class="w">{{ d[0] }}</td><td class="g">{{ d[1] }}</td><td :class="d[2] === '1734' ? 'm' : 'y'">{{ d[2] }}</td>
                  <td class="side" :class="d[3] === 'B' ? 'r' : 'g'">{{ d[3] }}</td><td class="n">{{ d[4] }}</td>
                </tr>
              </tbody>
            </table>
            <div class="panel-tabs">
              <button v-for="(t, i) in panelTabs" :key="t" type="button" :class="{ on: i === 0 }">{{ t }}</button>
            </div>
          </aside>
        </div>

        <div class="news"><a v-for="n in news" :key="n" href="#">{{ n }}</a></div>
        <footer class="status">
          <span class="drop"><svg width="12" height="12" viewBox="0 0 12 12"><path d="M3 4l3 4 3-4" fill="none" stroke="#151c20" stroke-width="2" /></svg></span>
          <div v-for="x in indices" :key="x[0]" class="index"><span>{{ x[0] }}</span><span class="dn">{{ x[1] }}</span><span class="dn rt">{{ x[2] }}</span><span class="dn rt">{{ x[3] }}</span><span class="vol">{{ x[4] }}</span></div>
          <span class="total">总成交</span><span>19462亿</span>
          <svg class="gauge" width="14" height="14" viewBox="0 0 14 14"><path d="M4 12a6 6 0 1 1 6 0M7 10l2-6" fill="none" stroke="#5d6478" stroke-width="2" /></svg>
          <span class="badge">3</span><span class="link">已连接</span>
          <svg class="tray" width="106" height="16" viewBox="0 0 106 16">
            <path d="M0 3h16v10H0z" fill="#5d6478" /><path d="M2 6h2M6 6h2M10 6h2M2 10h12" stroke="#151c20" stroke-width="2" />
            <path d="M33 5h4v7h-4zM38 3h4v10h-4zM43 2h2v8h-2zM34 3h2v12h-2zM39 1h2v14h-2z" fill="#5d6478" />
            <circle cx="69" cy="8" r="6" fill="none" stroke="#5d6478" stroke-width="2" stroke-dasharray="7 2" /><path d="M69 3v10M64 8h10" stroke="#5d6478" />
            <path d="M94 6h10v7h2v2H92v-2h2zM92 1l3 3M98 0h2v4h-2zM106 1l-3 3" fill="#fff" stroke="#fff" />
          </svg>
          <time>17:51:20</time>
        </footer>
      </div>

      <div class="rail">
        <template v-for="t in tools" :key="t.label">
          <hr v-if="t.sep" />
          <button type="button" :aria-label="t.label" :class="{ on: t.on }">
            <svg v-if="t.shapes" width="16" height="16" viewBox="0 0 16 16">
              <path v-for="(p, i) in t.shapes" :key="i" :d="p.d" :fill="p.f ?? 'none'" :stroke="p.s ?? 'none'" :stroke-width="p.w ?? 1" />
            </svg>
            <span v-else :class="{ boxed: t.box, bold: t.bold }" :style="{ color: t.color ?? '#1a3fc8', borderColor: t.box }">{{ t.text }}</span>
          </button>
        </template>
      </div>
    </div>
  </div>
</template>

<style>
body { background: #000; }
</style>

<style scoped>
* { box-sizing: border-box; }
.app { font: 12px/16px "Liberation Sans", "Noto Sans CJK SC", sans-serif; color: #c0c0c0; background: #000; overflow: hidden; }
button { margin: 0; padding: 0; border: 0; background: none; color: inherit; font: inherit; white-space: nowrap; cursor: pointer; }
a { color: inherit; text-decoration: none; }
svg { display: block; flex: none; }

.top { display: flex; height: 31px; background: #404557; border-bottom: 1px solid #232838; }
.brand { display: flex; align-items: center; gap: 4px; width: 152px; padding-left: 13px; color: #f0f2f6; font-size: 15px; line-height: 24px; height: 30px; }
.nav { display: flex; gap: 22px; font-size: 14px; line-height: 30px; color: #fff; }
.nav-group { display: flex; gap: 26px; }
.nav-group.wide { gap: 22px; }
.nav a { position: relative; color: #fff; }
.nav a.on::after { content: ""; position: absolute; left: -13px; right: -13px; bottom: 0; height: 2px; background: #5c84ff; }
.win { display: flex; gap: 8px; margin: 4px 10px 0 auto; }
.win button { width: 20px; height: 20px; border-radius: 4px; background: #1f2434; }

.body { display: grid; grid-template-columns: minmax(0, 1fr) 25px; }
.work { display: grid; grid-template-columns: minmax(0, 1fr) 280px; }
.periods { display: flex; height: 21px; border-bottom: 1px solid #b00000; line-height: 20px; }
.pane-toggle { width: 23px; padding-left: 4px; border-right: 1px solid #b00000; }
.period-list { display: flex; gap: 9px; padding-left: 4px; }
.period-list .spaced { padding: 0 2px; }
.on { color: #5ce8f0; }
.actions { display: flex; margin-left: auto; border-right: 1px solid #b00000; }
.actions button { width: 35px; border-left: 1px solid #b00000; }

.pane { position: relative; }
.sub { border-top: 1px solid #b00000; }
.plot { width: 100%; height: auto; }
.mark { font-size: 12px; font-weight: 700; }
.empty { font-size: 12px; fill: #c0c0c0; }
.axis { font-size: 12px; font-weight: 700; fill: #ff3232; }
.day { font-size: 12px; fill: #c0c0c0; font-weight: 500; }
.flag { font-size: 11px; fill: #fff; }
.thick { fill: none; stroke-width: 4; }
.blue { stroke: #0000ff; }
.red { stroke: #ff0000; }
.kR { fill: #ff0000; }
.kD { fill: url(#gd); }
.kG { fill: url(#gg); }
.kO { fill: url(#go); }
.kY { fill: url(#gy); }
.kM { fill: #ff00ff; }

.legend { position: absolute; left: 2px; top: 0; display: flex; align-items: center; height: 18px; font-size: 13px; line-height: 18px; white-space: nowrap; }
.stock { color: #5ce8f0; }
.drop { display: inline-block; width: 12px; height: 12px; margin: 0 4px; border-radius: 6px; background: #606060; }
.sub .legend { left: 0; height: 16px; line-height: 16px; }
.sub .drop { margin-left: 1px; }
.ind { margin-right: 6px; }
.reading { display: flex; align-items: center; margin-right: 5px; font-weight: 700; }
.reading b { margin-left: 2px; font-size: 12px; }
.reading svg { margin: 0 1px 0 2px; }
.legend-tools { position: absolute; right: 53px; top: 3px; }
.topics { position: absolute; left: 16px; top: 18px; margin: 0; font-size: 13px; font-weight: 700; line-height: 26px; white-space: nowrap; }
.topics div { display: flex; }
.topics dt { width: 63px; color: #ff1414; }
.topics dd { margin: 0; color: #ffff00; }

.tabs { display: flex; height: 17px; border-top: 1px solid #b00000; line-height: 18px; border-right: 1px solid #b00000; overflow: hidden; }
.tabs button { padding: 0 4px 0 3px; border-right: 1px solid #b00000; flex: none; }
.tabs .push { flex: 1; border-right: 1px solid #b00000; }
.tabs .w42 { width: 42px; }
.tabs .w25 { width: 25px; }
.tabs button:last-child { border-right: 0; }
.second { height: 19px; border-bottom: 1px solid #b00000; line-height: 19px; }
.tabs .tight { padding: 0 0 0 1px; }
.tabs .w51 { width: 51px; text-align: left; overflow: hidden; }
.gold { color: #c8c000; }

.panel { display: flex; flex-direction: column; font-size: 14px; }
.title { display: flex; height: 28px; padding-left: 17px; color: #c0c0c0; }
.title > b { color: #5ce8f0; font-size: 19px; line-height: 28px; font-weight: 500; }
.code { margin-left: 4px; line-height: 31px; }
.tag { display: flex; flex-direction: column; color: #ff4040; font-size: 10px; line-height: 9px; padding-top: 5px; align-items: center; }
.tag i { font-style: normal; }
.quote { display: grid; grid-template-columns: 101px 1fr auto; height: 28px; padding: 0 4px 0 2px; border-bottom: 1px solid #b00000; color: #00e600; font-size: 20px; line-height: 27px; }
table { width: 100%; border-collapse: collapse; table-layout: fixed; }
th { padding: 0 0 0 2px; font-weight: 400; font-size: 17px; text-align: left; white-space: nowrap; }
td { padding: 0 3px 0 0; font-family: Roboto, "Noto Sans CJK SC", sans-serif; font-weight: 500; text-align: right; white-space: nowrap; }
.book tr { height: 18px; }
.book th, .book td { line-height: 18px; }
.book th { width: 60px; }
.book td:nth-child(2) { width: 80px; }
.balance { height: 2px; background: #3a7fc0; margin-bottom: 1px; }
.balance i { display: block; width: 51px; height: 2px; background: #d08820; }
.stats { border-top: 1px solid #b00000; }
.stats th:nth-child(1), .stats td:nth-child(2) { width: 70px; }
.stats th:nth-child(3) { width: 60px; }
.stats th, .stats td { line-height: 19px; height: 19px; }
.stats .w { font-weight: 400; }
.s1 { margin-top: 2px; }
.s2 { margin-bottom: 3px; }
.state { height: 20px; padding-left: 1px; border-top: 1px solid #b00000; font-size: 16px; line-height: 19px; }
.state span { font-size: 14px; }
.flow { display: flex; align-items: center; height: 24px; padding: 0 2px; border-top: 1px solid #b00000; border-bottom: 1px solid #b00000; color: #00e600; }
.flow-name { color: #c0c0c0; font-size: 17px; margin-right: 3px; }
.flow i { width: 70px; height: 7px; margin-left: 9px; background: #00e600; }
.amount { margin-left: auto; }
.share { width: 39px; text-align: right; }
.deals tr { height: 18px; }
.deals td { line-height: 18px; padding: 0; }
.deals .c1 { width: 60px; }
.deals .c2 { width: 77px; }
.deals .c3 { width: 82px; }
.deals .c4 { width: 32px; }
.deals td:first-child { text-align: left; padding-left: 2px; }
.deals .side { padding-right: 6px; }
.deals .n { padding-right: 3px; color: #808080; font-weight: 400; }
.deals .mark { font-size: 14px; }
.deals .mark td { background: repeating-linear-gradient(90deg, #a00000 0 1px, transparent 1px 4px) 0 0 / 100% 1px no-repeat; }
.g { color: #00e600; }
.r { color: #ff3232; }
.y { color: #c8c000; }
.w { color: #c0c0c0; }
.m { color: #c000c0; }
.panel-tabs { display: flex; height: 19px; margin-top: auto; border-top: 1px solid #b00000; border-bottom: 1px solid #b00000; font-size: 13px; line-height: 18px; }
.panel-tabs button { flex: 1; border-right: 1px solid #b00000; }
.panel-tabs button:last-child { border-right: 0; }

.news { display: flex; gap: 41px; height: 22px; padding-left: 1px; background: #33353f; color: #fff; line-height: 24px; white-space: nowrap; overflow: hidden; }
.status { display: flex; align-items: center; height: 22px; padding: 2px 3px 0 0; background: #151c20; color: #fff; font-family: Roboto, "Noto Sans CJK SC", sans-serif; font-size: 14px; line-height: 20px; white-space: nowrap; }
.status .drop { margin: 0 7px 0 6px; background: #5d6478; }
.index { display: grid; grid-template-columns: 35px 60px 50px 58px 72px; }
.dn { color: #2fb457; }
.rt { text-align: right; }
.vol { padding-left: 12px; }
.total { margin-right: 10px; }
.gauge { margin: 0 5px 0 8px; }
.badge { width: 15px; height: 14px; border-radius: 3px; background: #5d6478; color: #151c20; font-size: 12px; font-weight: 700; line-height: 14px; text-align: center; }
.link { margin-left: 3px; font-size: 12px; }
.tray { margin-left: auto; }
.status time { margin-left: 14px; font-size: 12px; }

.rail { display: flex; flex-direction: column; background: #f0f0f0; color: #003399; border-left: 1px solid #fff; }
.rail button { display: flex; align-items: center; justify-content: center; height: 22px; }
.rail hr { width: 19px; height: 1px; margin: 3px auto 4px; border: 0; background: #a0a0a0; }
.rail .on { margin-top: 1px; background: #fff; border: 1px solid #a0a0a0; }
.rail span { font-size: 12px; line-height: 14px; }
.rail .boxed { width: 16px; height: 15px; border: 1px solid; background: #fff; font-size: 9px; line-height: 13px; text-align: center; overflow: hidden; }
.rail .bold { font-weight: 700; }
</style>
